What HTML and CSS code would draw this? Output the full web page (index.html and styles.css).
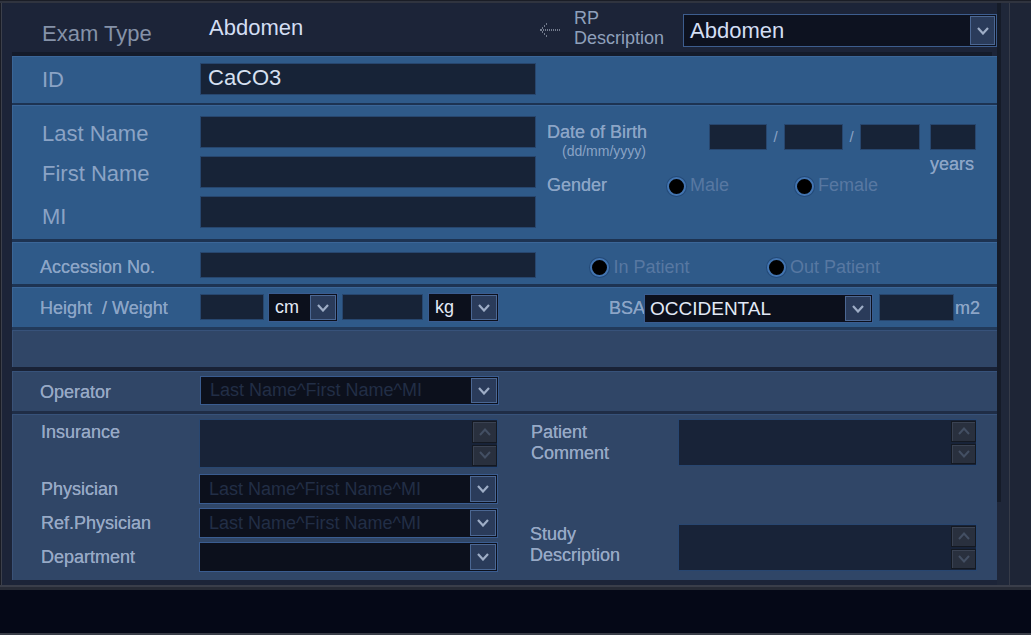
FILE: index.html
```html
<!DOCTYPE html>
<html>
<head>
<meta charset="utf-8">
<title>Patient Info</title>
<link rel="stylesheet" href="styles.css">
</head>
<body>
<div class="window">
  <div class="top-line"></div>
  <div class="main">
    <div class="left-edge"></div>
    <div class="content">
      <div class="exam-row">
        <div class="exam-label">Exam Type</div>
        <div class="exam-value">Abdomen</div>
        <svg class="arrow" viewBox="0 0 21 14" width="21" height="14">
          <g fill="#c9d1e0">
            <rect x="0" y="6.5" width="1" height="1"/>
            <rect x="2" y="4.5" width="1" height="1"/><rect x="4" y="2.5" width="1" height="1"/><rect x="6" y="0.5" width="1" height="1"/>
            <rect x="2" y="8.5" width="1" height="1"/><rect x="4" y="10.5" width="1" height="1"/><rect x="6" y="12.5" width="1" height="1"/>
          </g>
          <line x1="1" y1="7" x2="21" y2="7" stroke="#c9d1e0" stroke-width="1" stroke-dasharray="1 1"/>
        </svg>
        <div class="rp-label">RP<br>Description</div>
        <div class="select select-exam">
          <span class="select-text exam-select-text">Abdomen</span>
          <span class="drop-btn exam-btn"><svg class="chev" viewBox="0 0 12 8"><polyline points="1,1 6,6.5 11,1"/></svg></span>
        </div>
      </div>
      <div class="sep sep-exam"></div>

      <div class="blue id-row">
        <div class="big-label id-label">ID</div>
        <div class="field id-field"><span class="field-text">CaCO3</span></div>
      </div>
      <div class="sep sep-blue s2"></div>

      <div class="blue name-section">
        <div class="name-grid">
          <div class="big-label nm">Last Name</div><div class="field"></div>
          <div class="big-label nm">First Name</div><div class="field"></div>
          <div class="big-label nm mi">MI</div><div class="field"></div>
        </div>
        <div class="name-right">
          <div class="dob-row">
            <div class="dob-label">
              <div class="lbl">Date of Birth</div>
              <div class="dob-sub">(dd/mm/yyyy)</div>
            </div>
            <div class="field dob-box w58"></div>
            <div class="slash">/</div>
            <div class="field dob-box w59"></div>
            <div class="slash">/</div>
            <div class="field dob-box w60"></div>
            <div class="age-col">
              <div class="field dob-box w46"></div>
              <div class="lbl years">years</div>
            </div>
          </div>
          <div class="gender-row">
            <div class="lbl gender-label">Gender</div>
            <span class="radio"></span><span class="radio-text male">Male</span>
            <span class="radio"></span><span class="radio-text">Female</span>
          </div>
        </div>
      </div>
      <div class="sep sep-blue s3"></div>

      <div class="blue acc-row">
        <div class="lbl row-label acc-label">Accession No.</div>
        <div class="field acc-field"></div>
        <span class="radio acc-radio first-radio"></span><span class="radio-text acc-text in-text">In Patient</span>
        <span class="radio acc-radio"></span><span class="radio-text acc-text">Out Patient</span>
      </div>
      <div class="sep sep-blue s3"></div>

      <div class="blue hw-row">
        <div class="lbl row-label hw-label">Height&nbsp; / Weight</div>
        <div class="field hw-field w64"></div>
        <div class="select hw-select cm-select">
          <span class="select-text">cm</span>
          <span class="drop-btn"><svg class="chev" viewBox="0 0 12 8"><polyline points="1,1 6,6.5 11,1"/></svg></span>
        </div>
        <div class="field hw-field w81 ml4"></div>
        <div class="select hw-select kg-select">
          <span class="select-text">kg</span>
          <span class="drop-btn"><svg class="chev" viewBox="0 0 12 8"><polyline points="1,1 6,6.5 11,1"/></svg></span>
        </div>
        <div class="lbl bsa-label">BSA</div>
        <div class="select hw-select bsa-select">
          <span class="select-text bsa-text">OCCIDENTAL</span>
          <span class="drop-btn"><svg class="chev" viewBox="0 0 12 8"><polyline points="1,1 6,6.5 11,1"/></svg></span>
        </div>
        <div class="field m2-field"></div>
        <div class="lbl m2-label">m2</div>
      </div>
      <div class="sep sep-mid s3"></div>

      <div class="gray empty-row"></div>
      <div class="sep sep-dark s4"></div>

      <div class="gray op-row">
        <div class="lbl glbl row-label op-label">Operator</div>
        <div class="select name-select op-select">
          <span class="select-text placeholder">Last Name^First Name^MI</span>
          <span class="drop-btn"><svg class="chev" viewBox="0 0 12 8"><polyline points="1,1 6,6.5 11,1"/></svg></span>
        </div>
      </div>
      <div class="sep sep-gray s3"></div>

      <div class="gray bottom-section">
        <div class="bs-left">
          <div class="bs-row">
            <div class="lbl glbl bs-label top-label">Insurance</div>
            <div class="tarea ins-area">
              <div class="spin">
                <span class="spin-btn"><svg class="chev" viewBox="0 0 12 8"><polyline points="1,7 6,1.5 11,7"/></svg></span>
                <span class="spin-btn"><svg class="chev" viewBox="0 0 12 8"><polyline points="1,1 6,6.5 11,1"/></svg></span>
              </div>
            </div>
          </div>
          <div class="bs-row sel-row first-sel">
            <div class="lbl glbl bs-label">Physician</div>
            <div class="select name-select bs-select">
              <span class="select-text placeholder">Last Name^First Name^MI</span>
              <span class="drop-btn"><svg class="chev" viewBox="0 0 12 8"><polyline points="1,1 6,6.5 11,1"/></svg></span>
            </div>
          </div>
          <div class="bs-row sel-row">
            <div class="lbl glbl bs-label">Ref.Physician</div>
            <div class="select name-select bs-select">
              <span class="select-text placeholder">Last Name^First Name^MI</span>
              <span class="drop-btn"><svg class="chev" viewBox="0 0 12 8"><polyline points="1,1 6,6.5 11,1"/></svg></span>
            </div>
          </div>
          <div class="bs-row sel-row">
            <div class="lbl glbl bs-label">Department</div>
            <div class="select name-select bs-select">
              <span class="select-text placeholder"></span>
              <span class="drop-btn"><svg class="chev" viewBox="0 0 12 8"><polyline points="1,1 6,6.5 11,1"/></svg></span>
            </div>
          </div>
        </div>
        <div class="bs-right">
          <div class="bs-row">
            <div class="lbl glbl br-label top-label">Patient<br>Comment</div>
            <div class="tarea r-area">
              <div class="spin">
                <span class="spin-btn"><svg class="chev" viewBox="0 0 12 8"><polyline points="1,7 6,1.5 11,7"/></svg></span>
                <span class="spin-btn"><svg class="chev" viewBox="0 0 12 8"><polyline points="1,1 6,6.5 11,1"/></svg></span>
              </div>
            </div>
          </div>
          <div class="bs-row study-row">
            <div class="lbl glbl br-label study-label">Study<br>Description</div>
            <div class="tarea r-area">
              <div class="spin">
                <span class="spin-btn"><svg class="chev" viewBox="0 0 12 8"><polyline points="1,7 6,1.5 11,7"/></svg></span>
                <span class="spin-btn"><svg class="chev" viewBox="0 0 12 8"><polyline points="1,1 6,6.5 11,1"/></svg></span>
              </div>
            </div>
          </div>
        </div>
      </div>
    </div>
    <div class="track"><div class="thumb"></div></div>
    <div class="vline"></div>
    <div class="right-area"></div>
  </div>
  <div class="bottom-line1"></div>
  <div class="bottom-band"></div>
  <div class="bottom-bar"></div>
  <div class="bottom-line2"></div>
</div>
</body>
</html>
```

FILE: styles.css
```css
* { box-sizing: border-box; margin: 0; padding: 0; }
html, body { width: 1031px; height: 635px; overflow: hidden; }
body {
  margin: 0;
  background: #1c2438;
  font-family: "Liberation Sans", Arial, sans-serif;
}
.window { width: 1031px; height: 635px; display: flex; flex-direction: column; background: #1c2438; }
.top-line { height: 3px; background: #30343f; border-top: 1px solid #1a1d26; }
.main { height: 582px; display: flex; }
.left-edge { width: 12px; border-left: 1px solid #191c25; box-shadow: inset 1px 0 0 #3c404b; }
.content { width: 985px; display: flex; flex-direction: column; }
.track { width: 12px; background: #1f2739; }
.thumb { width: 4px; height: 499px; background: #151b28; }
.vline { width: 1px; background: #363b48; }
.right-area { flex: 1; background: #1e2536; }
.bottom-line1 { height: 2px; background: #3a3e4a; }
.bottom-band { height: 3px; background: #272b36; }
.bottom-bar { height: 43px; background: #050817; }
.bottom-line2 { height: 2px; background: #383c47; }

/* separators */
.sep-exam { height: 4px; background: #141b2a; margin-right: 5px; }
.sep-blue { background: #1d3352; }
.sep-mid { background: #223a5a; }
.sep-dark { background: #192236; }
.sep-gray { background: #1f2d46; }
.s2 { height: 2px; }
.s3 { height: 3px; }
.s4 { height: 4px; }

.blue { background: #2f5a89; box-shadow: inset 0 1px 0 #3b6698, inset 1px 0 0 #3a6595; }
.gray { background: #304667; box-shadow: inset 0 1px 0 #37527a, inset 1px 0 0 #3a5277; }

/* text */
.lbl { font-size: 18px; line-height: 21px; color: #8ca5c7; white-space: nowrap; text-shadow: 0 0 0.4px #8ca5c7; }
.glbl { color: #97a9c6; text-shadow: 0 0 0.4px #97a9c6; }
.big-label { font-size: 22px; line-height: 26px; color: #8ba3c5; white-space: nowrap; }

/* fields */
.field { background: #172337; border: 1px solid #27466e; }
.field-text { display: block; padding: 1px 0 0 7px; font-size: 22px; line-height: 26px; color: #d6e0f1; }

.select { display: flex; align-items: center; background: #0c101c; border: 1px solid #3a5c90; }
.select-text { flex: 1; padding-left: 6px; font-size: 18px; line-height: 21px; color: #e2e9f6; white-space: nowrap; overflow: hidden; }
.select-text.placeholder { padding-left: 9px; color: #222e46; }
.drop-btn {
  width: 26px; align-self: stretch; margin: 1px;
  background: #2a3b5a; border: 1px solid #4b6793;
  display: flex; align-items: center; justify-content: center;
}
.chev { width: 12px; height: 8px; fill: none; stroke: #9eadc6; stroke-width: 2.2; }

.tarea { display: flex; justify-content: flex-end; background: #182338; border: 1px solid #284670; }
.spin { width: 25px; display: flex; flex-direction: column; gap: 2px; padding: 1px 0 1px 0; }
.spin-btn {
  flex: 1; background: #29303e; border: 1px solid #141922;
  box-shadow: inset 1px 1px 0 #3a4252;
  display: flex; align-items: center; justify-content: center;
}
.spin .chev { stroke: #434f63; stroke-width: 2; }

.radio {
  flex: none; width: 19px; height: 19px; border-radius: 50%;
  background: #000; border: 2px solid #4274b0;
  box-shadow: 0 0 0 1px #244a78;
}
.radio-text { font-size: 18px; line-height: 21px; color: #5878a2; margin-left: 4px; white-space: nowrap; }

/* exam row */
.exam-row { height: 49px; display: flex; align-items: flex-start; padding-left: 30px; }
.exam-label { width: 167px; margin-top: 18px; font-size: 22px; line-height: 26px; color: #8592a8; white-space: nowrap; }
.exam-value { width: 331px; margin-top: 12px; font-size: 22px; line-height: 26px; color: #d3def3; }
.arrow { flex: none; width: 21px; height: 14px; margin-top: 20px; margin-right: 13px; }
.rp-label { width: 109px; margin-top: 5px; font-size: 18px; line-height: 20px; color: #8fa0bb; }
.select-exam { width: 314px; height: 33px; margin-top: 11px; background: #0d1220; border-color: #3d5d8e; }
.exam-select-text { font-size: 22px; line-height: 26px; padding-left: 6px; align-self: flex-start; margin-top: 3px; color: #d3def3; }
.exam-btn { width: 25px; }

/* id row */
.id-row { height: 47px; display: flex; align-items: flex-start; padding-left: 30px; }
.id-label { width: 158px; margin-top: 11px; }
.id-field { width: 336px; height: 32px; margin-top: 7px; }

/* name section */
.name-section { height: 134px; display: flex; align-items: flex-start; padding-left: 30px; }
.name-grid { display: grid; grid-template-columns: 158px 336px; grid-auto-rows: 32px; row-gap: 8px; margin-top: 11px; }
.nm { align-self: start; margin-top: 5px; }
.mi { margin-top: 8px; }
.name-right { margin-left: 11px; display: flex; flex-direction: column; }
.dob-row { display: flex; align-items: flex-start; margin-top: 17px; }
.dob-label { width: 162px; }
.dob-sub { font-size: 14px; line-height: 16px; padding-left: 15px; color: #8aa3c5; white-space: nowrap; }
.dob-box { height: 26px; margin-top: 2px; }
.w58 { width: 58px; }
.w59 { width: 59px; }
.w60 { width: 60px; }
.w46 { width: 46px; }
.slash { width: 17px; height: 26px; margin-top: 2px; text-align: center; font-size: 15px; line-height: 26px; color: #8aa3c5; }
.age-col { margin-left: 10px; width: 46px; display: flex; flex-direction: column; }
.years { margin-top: 4px; }
.gender-row { display: flex; align-items: flex-start; }
.gender-label { width: 120px; }
.gender-row .radio { margin-top: 1.5px; }
.male { width: 105px; }

/* accession */
.acc-row { height: 42px; display: flex; align-items: flex-start; padding-left: 28px; }
.row-label { width: 160px; }
.acc-label { margin-top: 15px; }
.acc-field { width: 336px; height: 26px; margin-top: 10px; }
.acc-radio { margin-top: 16px; }
.first-radio { margin-left: 54px; }
.acc-text { margin-top: 15px; margin-left: 4.5px; }
.in-text { width: 153px; }

/* height / weight */
.hw-row { height: 40px; display: flex; align-items: flex-start; padding-left: 28px; }
.hw-label { margin-top: 11px; }
.hw-field { height: 26px; margin-top: 7px; }
.w64 { width: 64px; }
.w81 { width: 81px; }
.ml4 { margin-left: 4px; }
.hw-select { height: 29px; margin-top: 6px; }
.cm-select { width: 70px; margin-left: 4px; }
.kg-select { width: 71px; margin-left: 5px; }
.bsa-label { width: 35px; margin-left: 110px; margin-top: 11px; }
.bsa-select { width: 229px; margin-top: 7px; }
.bsa-text { font-size: 19px; line-height: 22px; padding-left: 5px; }
.m2-field { width: 75px; height: 27px; margin-left: 6px; margin-top: 7px; }
.m2-label { margin-left: 1px; margin-top: 11px; }

/* gray rows */
.empty-row { height: 37px; }
.op-row { height: 40px; display: flex; align-items: flex-start; padding-left: 28px; }
.op-label { margin-top: 11px; }
.name-select { width: 299px; height: 29px; }
.op-select { margin-top: 5px; }

.bottom-section { height: 166px; display: flex; align-items: flex-start; padding-left: 29px; }
.bs-left { display: flex; flex-direction: column; margin-top: 5px; }
.bs-row { display: flex; align-items: flex-start; }
.bs-label { width: 158px; }
.top-label { margin-top: 3px; }
.ins-area { width: 299px; height: 49px; }
.sel-row { align-items: center; margin-top: 4px; }
.first-sel { margin-top: 6px; }
.bs-select { height: 30px; }
.bs-right { display: flex; flex-direction: column; margin-left: 33px; margin-top: 5px; }
.br-label { width: 147px; }
.r-area { width: 299px; height: 47px; }
.study-row { margin-top: 58px; }
.study-label { margin-left: -1px; margin-right: 1px; }
```
